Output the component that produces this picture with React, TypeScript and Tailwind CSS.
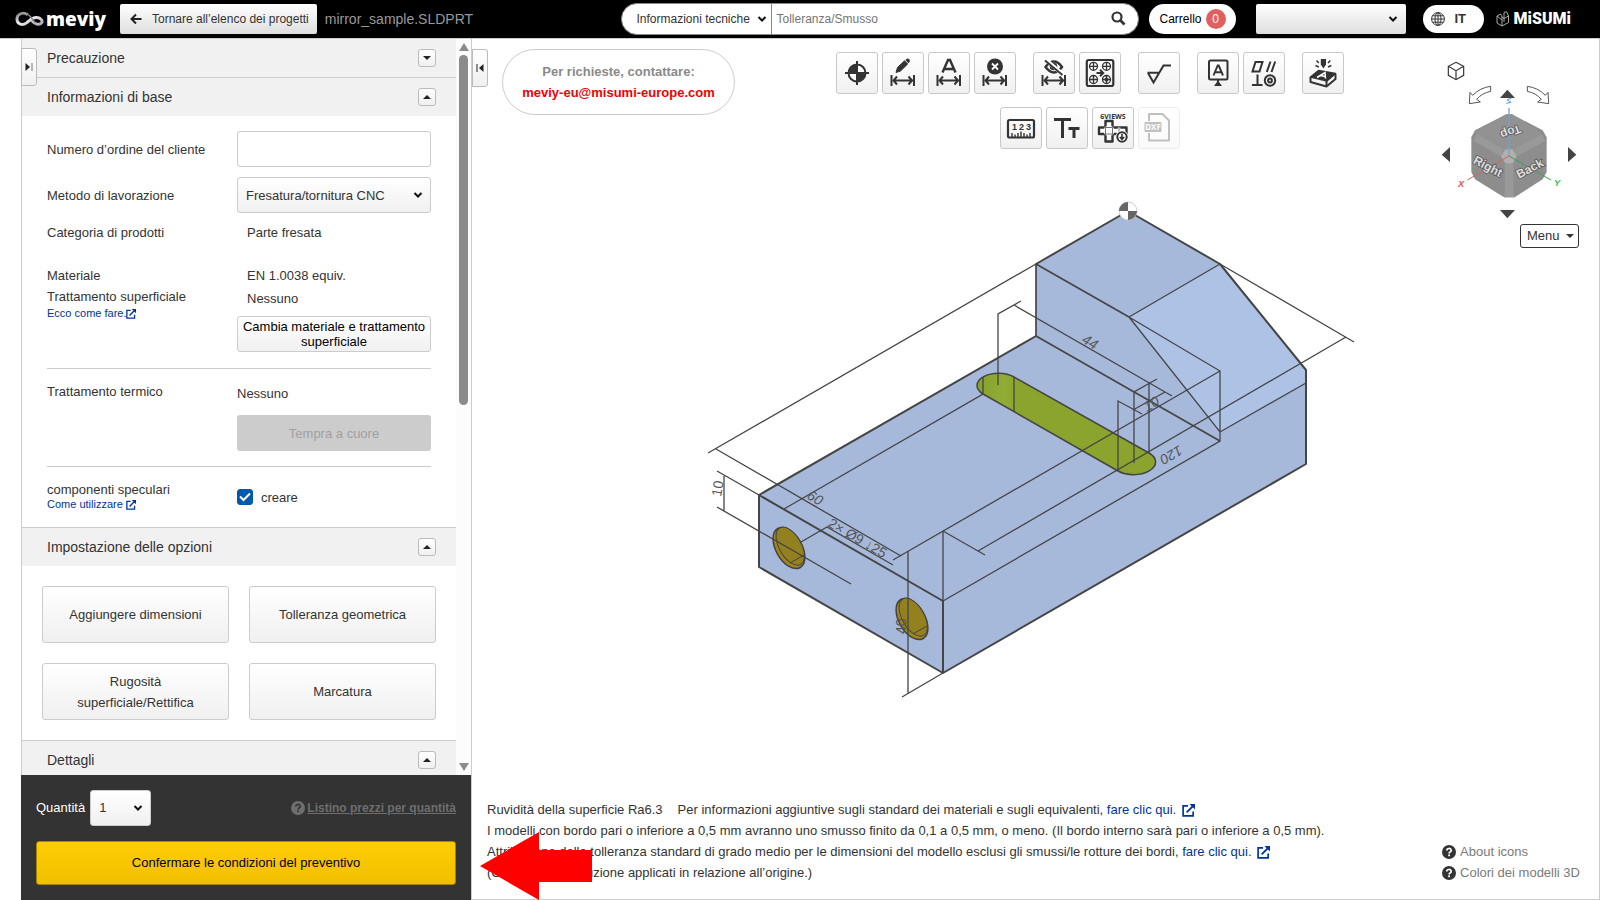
import { useState } from 'react';
import type { ReactNode } from 'react';

type ToolItem = {
  label: string;
  icon: ReactNode;
  disabled?: boolean;
};

const Chevron = () => (
  <svg viewBox="0 0 10 8" className="pointer-events-none absolute right-2 top-1/2 h-2 w-2.5 -translate-y-1/2">
    <path d="M1.5 2 L5 5.5 L8.5 2" fill="none" stroke="#111" strokeWidth="2" />
  </svg>
);

const ExternalIcon = ({ small }: { small?: boolean }) => (
  <svg viewBox="0 0 14 14" className={small ? 'inline size-[10px]' : 'ml-0.5 inline size-[13px]'}>
    <path d="M6.5 2 H1.2 V12.8 H12 V8" fill="none" stroke="#0033a0" strokeWidth="1.8" />
    <path d="M5 9 L11.5 2.5" stroke="#0033a0" strokeWidth="2" />
    <path d="M8 0 H14 V6 Z" fill="#0033a0" />
  </svg>
);

const HelpDot = ({ color, mark }: { color: string; mark: string }) => (
  <svg viewBox="0 0 14 14" className="size-[14px] shrink-0">
    <circle cx="7" cy="7" r="7" fill={color} />
    <path d="M4.8 5.6 C4.8 2.8 9.2 2.8 9.2 5.4 C9.2 6.9 7.1 6.9 7.1 8.5" fill="none" stroke={mark} strokeWidth="1.7" />
    <rect x="6.2" y="9.4" width="1.8" height="1.8" fill={mark} />
  </svg>
);

// horizontal dimension symbol shared by several tool icons
const Span = () => (
  <g fill="none" stroke="#333" strokeWidth="2">
    <path d="M9.5 23 V34 M32 23 V34" />
    <path d="M11 28.5 H31 M15 24.5 L11.5 28.5 L15 32.5 M26.5 24.5 L30 28.5 L26.5 32.5" />
  </g>
);

const bolt = (x: number, y: number) => (
  <g key={`${x}-${y}`} fill="none" stroke="#333" strokeWidth="1.3">
    <circle cx={x} cy={y} r="4" />
    <path d={`M${x - 4} ${y} H${x + 4} M${x} ${y - 4} V${y + 4}`} />
  </g>
);

const topTools: ToolItem[][] = [
  [
    {
      label: 'Origine',
      icon: (
        <>
          <circle cx="21" cy="21" r="8.5" fill="#fff" stroke="#333" strokeWidth="2" />
          <path d="M21 21 V12.5 A8.5 8.5 0 0 0 12.5 21 Z M21 21 V29.5 A8.5 8.5 0 0 0 29.5 21 Z" fill="#333" />
          <path d="M9 21 H33 M21 9 V33" stroke="#333" strokeWidth="2" />
        </>
      ),
    },
    {
      label: 'Modifica dimensione',
      icon: (
        <>
          <path d="M14 20.5 L15.5 15.5 L22.5 8.8 L25.7 12 L18.5 19 Z" fill="#333" stroke="#333" strokeWidth="1" />
          <path d="M23.3 8 L24.5 7 Q26 6 27.3 7.3 Q28.5 8.7 27.5 10 L26.4 11.2 Z" fill="#333" />
          <Span />
        </>
      ),
    },
    {
      label: 'Dimensione automatica',
      icon: (
        <>
          <path d="M14.5 20.5 L20 8 H22 L27.5 20.5 M16.5 17 H25.5" fill="none" stroke="#333" strokeWidth="2.4" />
          <Span />
        </>
      ),
    },
    {
      label: 'Elimina dimensione',
      icon: (
        <>
          <circle cx="21" cy="14.5" r="8" fill="#333" />
          <path d="M18 11.5 L24 17.5 M24 11.5 L18 17.5" stroke="#fff" strokeWidth="1.8" />
          <Span />
        </>
      ),
    },
  ],
  [
    {
      label: 'Nascondi dimensioni',
      icon: (
        <>
          <path d="M12.5 15 Q21 4 29 15 Q21 26 12.5 15 Z" fill="none" stroke="#333" strokeWidth="2.4" />
          <circle cx="20.5" cy="14.5" r="2.8" fill="none" stroke="#333" strokeWidth="2" />
          <path d="M12.5 7.5 L30 22.5" stroke="#fff" strokeWidth="4" />
          <path d="M12 8.5 L29.5 23" stroke="#333" strokeWidth="1.8" />
          <Span />
        </>
      ),
    },
    {
      label: 'Gruppo fori',
      icon: (
        <>
          <rect x="7.8" y="8" width="26.5" height="26" rx="2" fill="none" stroke="#333" strokeWidth="2.2" />
          {[[14.5, 14.3], [27.5, 14.3], [14.5, 27.5], [27.5, 27.5]].map(([x, y]) => bolt(x, y))}
          <circle cx="27.5" cy="27.5" r="2" fill="#333" />
          <path d="M17.5 21 H23.5 M21 17.8 L24.2 21 L21 24.2" fill="none" stroke="#333" strokeWidth="2" />
        </>
      ),
    },
  ],
  [
    {
      label: 'Rugosità',
      icon: <path d="M9.5 20.8 H20.5 M10 21 L15.5 30.5 L25.5 13.5 H33" fill="none" stroke="#333" strokeWidth="2" />,
    },
  ],
  [
    {
      label: 'Riferimento',
      icon: (
        <>
          <rect x="12" y="8.5" width="18.5" height="19" rx="1.5" fill="none" stroke="#333" strokeWidth="2" />
          <path d="M16.5 23.5 L20.7 13.5 H21.7 L26 23.5 M18 20.3 H24.5 M21 27.5 V31" fill="none" stroke="#333" strokeWidth="1.9" />
          <path d="M17 34 L21 28.5 L25 34 Z" fill="#333" />
        </>
      ),
    },
    {
      label: 'Tolleranza geometrica',
      icon: (
        <g fill="none" stroke="#333" strokeWidth="2">
          <path d="M12.5 10 H19.5 L16.5 19.5 H9.5 Z M27.5 9.5 L23.8 20 M32.2 9.5 L28.5 20" />
          <path d="M14.5 22.5 V33 M9 33 H19.5" />
          <circle cx="27" cy="28.5" r="5.2" />
          <circle cx="27" cy="28.5" r="1.9" />
        </g>
      ),
    },
  ],
  [
    {
      label: 'Marcatura',
      icon: (
        <>
          <path d="M18.8 7 H24 V12.5 L21.4 16.5 L18.8 12.5 Z" fill="#333" />
          <path d="M14.5 8.5 L16.8 11 M13.5 13.5 L16.8 15 M28.3 8.5 L26 11 M29.3 13.5 L26 15" stroke="#333" strokeWidth="1.5" />
          <path d="M8.5 25 L16.5 18.5 L33.5 21.5 L25 29 Z" fill="#333" stroke="#333" strokeWidth="1.5" strokeLinejoin="round" />
          <path d="M8.5 25 V30 L24.5 34.5 L33.5 27 V22" fill="none" stroke="#333" strokeWidth="2" strokeLinejoin="round" />
          <path d="M24.5 28.5 V34" stroke="#333" strokeWidth="2" />
          <path d="M15 25.5 L23 20.5 L23.5 26.5 M18.5 23.5 L23 24.5" fill="none" stroke="#fff" strokeWidth="1.5" />
        </>
      ),
    },
  ],
];

const bottomTools: ToolItem[] = [
  {
    label: 'Misura',
    icon: (
      <>
        <rect x="8" y="13" width="26" height="17.5" rx="1.5" fill="none" stroke="#333" strokeWidth="2.2" />
        <g fontSize="9" fontWeight="700" fill="#333" textAnchor="middle">
          <text x="14.5" y="23">1</text>
          <text x="21.5" y="23">2</text>
          <text x="28.5" y="23">3</text>
        </g>
        <path d="M12 30 V26 M15 30 V27.5 M18 30 V26 M21 30 V24.5 M24 30 V26 M27 30 V27.5 M30 30 V26" stroke="#333" strokeWidth="1.4" />
      </>
    ),
  },
  {
    label: 'Dimensione testo',
    icon: (
      <g fill="none" stroke="#333" strokeWidth="3">
        <path d="M8 12.5 H25 M16.5 12.5 V31" />
        <path d="M22.5 21.5 H33.5 M28 21.5 V31" />
      </g>
    ),
  },
  {
    label: 'Sei viste',
    icon: (
      <>
        <text x="21" y="11.5" fontSize="7" fontFamily="Open Sans" fontWeight="700" fill="#333" textAnchor="middle">6VIEWS</text>
        <path d="M13.5 14 H20.5 V20.5 H34.5 V27 H20.5 V34.5 H13.5 V27 H7 V20.5 H13.5 Z" fill="#fff" stroke="#333" strokeWidth="2.4" strokeLinejoin="round" />
        <path d="M13.5 20.5 H20.5 M13.5 27 H20.5 M13.5 20.5 V27 M20.5 20.5 V27 M27 20.5 V27" stroke="#fff" strokeWidth="2.6" />
        <path d="M13.5 20.5 H20.5 M13.5 27 H20.5 M13.5 20.5 V27 M20.5 20.5 V27 M27 20.5 V27" stroke="#333" strokeWidth="0.7" />
        <circle cx="30" cy="30" r="6.5" fill="#fff" />
        <circle cx="30" cy="30" r="4.7" fill="#fff" stroke="#333" strokeWidth="2" />
        <path d="M30 27 V32 M27.8 30 L30 32.4 L32.2 30" fill="none" stroke="#333" strokeWidth="1.6" />
      </>
    ),
  },
  {
    label: 'Esporta DXF',
    disabled: true,
    icon: (
      <>
        <path d="M11 14 V7 H24.5 L31 13.5 V33.5 H11 V26" fill="none" stroke="#333" strokeWidth="2" strokeLinejoin="round" />
        <rect x="6.5" y="15" width="17" height="10" rx="1" fill="#333" />
        <text x="15" y="23" fontSize="8" fontFamily="Open Sans" fontWeight="700" fill="#fff" textAnchor="middle">DXF</text>
      </>
    ),
  },
];

const ToolButton = ({ tool }: { tool: ToolItem }) => (
  <button
    aria-label={tool.label}
    disabled={tool.disabled}
    className="flex size-[42px] items-center justify-center rounded-[3px] border border-[#c8c8c8] bg-linear-to-b from-white to-[#f0f0f0] disabled:opacity-30"
  >
    <svg viewBox="0 0 42 42" className="size-[42px] shrink-0">{tool.icon}</svg>
  </button>
);

const SectionHeader = ({ title, open, onToggle }: { title: string; open: boolean; onToggle: () => void }) => (
  <div className="flex h-[39px] shrink-0 items-center justify-between border-t border-[#ccc] bg-[#f1f1f1] pl-[25px] pr-5">
    <h2 className="text-sm">{title}</h2>
    <button
      onClick={onToggle}
      aria-label={title}
      className="flex size-[18px] items-center justify-center rounded-[3px] border border-[#bbb] bg-linear-to-b from-white to-[#f0f0f0]"
    >
      <svg viewBox="0 0 8 4" className="h-1 w-2">
        <path d={open ? 'M0 4 L4 0 L8 4 Z' : 'M0 0 L4 4 L8 0 Z'} fill="#222" />
      </svg>
    </button>
  </div>
);

const TopBar = () => (
  <header className="flex h-[39px] shrink-0 items-center border-b border-[#ccc] bg-black pb-px pl-[15px] pr-[29px]">
    <div className="flex w-[105px] shrink-0 items-center gap-0.5">
      <svg viewBox="0 0 30 16" className="h-4 w-[29px]">
        <defs>
          <linearGradient id="loop" x1="0" y1="0" x2="1" y2="1">
            <stop offset="0" stopColor="#77757a" />
            <stop offset="0.45" stopColor="#f2f0f4" />
            <stop offset="1" stopColor="#a9a7ac" />
          </linearGradient>
        </defs>
        <path
          d="M13 3.5 C8 0 2 3 2 8 C2 13 7 15.5 12 12 C16 9 18 6 22.5 6.5 C27 7 29 10 27.5 12 C25.5 15 20 13 17.5 10"
          fill="none"
          stroke="url(#loop)"
          strokeWidth="3"
        />
        <path d="M11 2.5 C16 3 17 8 21 12" fill="none" stroke="#88868b" strokeWidth="1.5" />
      </svg>
      <span className="font-['Open_Sans'] text-[19px] font-extrabold leading-6 text-white">meviy</span>
    </div>
    <button className="flex h-[30px] shrink-0 items-center gap-2.5 rounded-[2px] bg-linear-to-b from-white to-[#dedede] pl-2.5 pr-2 text-xs">
      <svg viewBox="0 0 12 12" className="size-3">
        <path d="M11.5 6 H2 M6 1.5 L1.5 6 L6 10.5" fill="none" stroke="#222" strokeWidth="2" />
      </svg>
      Tornare all’elenco dei progetti
    </button>
    <span className="ml-2 text-sm text-[#999]">mirror_sample.SLDPRT</span>

    <div className="ml-auto flex items-center">
      <form className="flex h-8 w-[518px] items-center overflow-hidden rounded-full border border-[#888] bg-white">
        <div className="relative h-full w-[150px] shrink-0 border-r border-[#888]">
          <select aria-label="Ambito" className="h-full w-full appearance-none bg-transparent pl-3.5 text-xs outline-none">
            <option>Informazioni tecniche</option>
          </select>
          <div className="absolute inset-y-0 -right-1 w-5">
            <Chevron />
          </div>
        </div>
        <input aria-label="Cerca" placeholder="Tolleranza/Smusso" className="h-full min-w-0 flex-1 px-1 text-xs outline-none placeholder:text-[#757575]" />
        <button aria-label="Avvia ricerca" className="mr-3">
          <svg viewBox="0 0 15 15" className="size-[15px]">
            <circle cx="6" cy="6" r="4.5" fill="none" stroke="#333" strokeWidth="2.2" />
            <path d="M9.3 9.3 L13.5 13.5" stroke="#333" strokeWidth="2.8" />
          </svg>
        </button>
      </form>
      <button className="ml-2.5 flex h-[30px] items-center gap-1 rounded-full bg-white px-2.5 text-xs text-black">
        Carrello
        <span className="flex size-5 items-center justify-center rounded-full bg-[#e05f5f] text-white">0</span>
      </button>
      <div className="relative ml-5 h-[30px] w-[150px]">
        <select aria-label="Account" className="h-full w-full appearance-none rounded-[2px] bg-linear-to-b from-white to-[#dedede]">
          <option></option>
        </select>
        <Chevron />
      </div>
      <button className="ml-[17px] flex h-7 w-[61px] items-center gap-2.5 rounded-full bg-white px-2 text-[13px] font-bold">
        <svg viewBox="0 0 14 14" className="size-3.5" fill="none" stroke="#333" strokeWidth="1">
          <circle cx="7" cy="7" r="6.4" />
          <ellipse cx="7" cy="7" rx="3" ry="6.4" />
          <path d="M7 0.6 V13.4 M0.6 7 H13.4 M1.5 3.8 H12.5 M1.5 10.2 H12.5" />
        </svg>
        IT
      </button>
      <div className="ml-3 flex items-center gap-1 text-white">
        <svg viewBox="0 0 14 16" className="h-4 w-3.5" fill="none" stroke="#bbb" strokeWidth="0.9">
          <path d="M1 5 L4.5 3 L6 6 V15 L1 12 Z M6 6 L8 7.5 M6 15 L12.5 11.5 V5 L8 7.5 V11 M8 7.5 V1.5 L10.5 0.7 L12.5 5 M1 5 L6 9" />
        </svg>
        <span className="font-[Roboto] text-base font-black leading-5">MiSUMi</span>
      </div>
    </div>
  </header>
);

const fieldButton =
  'rounded-[3px] border border-[#ccc] bg-linear-to-b from-white to-[#f0f0f0]';

const options = ['Aggiungere dimensioni', 'Tolleranza geometrica', 'Rugosità superficiale/Rettifica', 'Marcatura'];

const Sidebar = () => {
  const [open, setOpen] = useState({ warning: false, base: true, options: true, details: true });
  const [mirror, setMirror] = useState<boolean>(true);

  const toggle = (key: keyof typeof open) => setOpen({ ...open, [key]: !open[key] });

  return (
    <aside className="relative flex w-[450px] shrink-0 flex-col">
      <div className="flex min-h-0 flex-1 border-l border-[#ccc]">
        <div className="-mt-px min-w-0 flex-1 overflow-hidden">
          <SectionHeader title="Precauzione" open={open.warning} onToggle={() => toggle('warning')} />
          <SectionHeader title="Informazioni di base" open={open.base} onToggle={() => toggle('base')} />
          {open.base && (
            <div className="flex flex-col px-[25px] pb-[15px] pt-[15px] text-[13px] leading-[21px]">
              <div className="flex h-9 items-center">
                <label htmlFor="order" className="flex-1">Numero d’ordine del cliente</label>
                <input id="order" className="h-9 w-[194px] rounded-[3px] border border-[#ccc] px-2" />
              </div>
              <div className="mt-2.5 flex h-9 items-center">
                <label htmlFor="method" className="flex-1">Metodo di lavorazione</label>
                <div className="relative w-[194px]">
                  <select id="method" className={`h-9 w-full appearance-none pl-2 ${fieldButton}`}>
                    <option>Fresatura/tornitura CNC</option>
                  </select>
                  <Chevron />
                </div>
              </div>
              <div className="mt-[9px] flex">
                <span className="flex-1">Categoria di prodotti</span>
                <span className="w-[194px] pl-2.5">Parte fresata</span>
              </div>
              <div className="mt-[22px] flex">
                <div className="flex flex-1 flex-col items-start">
                  <span>Materiale</span>
                  <span>Trattamento superficiale</span>
                  <a href="#" className="text-[11px] leading-3 text-[#0033a0]">
                    Ecco come fare.<ExternalIcon small />
                  </a>
                </div>
                <div className="flex w-[194px] flex-col">
                  <span className="pl-2.5">EN 1.0038 equiv.</span>
                  <span className="mt-0.5 pl-2.5">Nessuno</span>
                  <button className={`mt-[7px] h-9 leading-[15px] text-black ${fieldButton}`}>
                    Cambia materiale e trattamento superficiale
                  </button>
                </div>
              </div>
              <hr className="mt-4 border-[#ccc]" />
              <div className="mt-3 flex">
                <span className="flex-1">Trattamento termico</span>
                <div className="flex w-[194px] flex-col pt-0.5">
                  <span>Nessuno</span>
                  <button disabled className="mt-[11px] h-9 rounded-[3px] bg-[#ccc] text-[#a0a0a0]">
                    Tempra a cuore
                  </button>
                </div>
              </div>
              <hr className="mt-[15px] border-[#ccc]" />
              <div className="mt-[15px] flex">
                <div className="flex flex-1 flex-col items-start leading-[15px]">
                  <span>componenti speculari</span>
                  <a href="#" className="text-[11px] text-[#0033a0]">
                    Come utilizzare <ExternalIcon small />
                  </a>
                </div>
                <label className="flex w-[194px] items-center gap-2">
                  <input
                    type="checkbox"
                    checked={mirror}
                    onChange={(e) => setMirror(e.target.checked)}
                    className="peer sr-only"
                  />
                  <span className="flex size-4 items-center justify-center rounded-[3px] border border-[#0059ab] bg-white peer-checked:bg-[#0059ab]">
                    <svg viewBox="0 0 12 10" className="h-2.5 w-3 shrink-0">
                      <path d="M1 4.5 L4.5 8 L11 1.5" fill="none" stroke="#fff" strokeWidth="2" />
                    </svg>
                  </span>
                  creare
                </label>
              </div>
            </div>
          )}
          <SectionHeader title="Impostazione delle opzioni" open={open.options} onToggle={() => toggle('options')} />
          {open.options && (
            <div className="grid grid-cols-2 gap-5 p-5">
              {options.map((name) => (
                <button key={name} className={`h-[57px] px-5 text-[13px] leading-[21px] ${fieldButton}`}>
                  {name}
                </button>
              ))}
            </div>
          )}
          <SectionHeader title="Dettagli" open={open.details} onToggle={() => toggle('details')} />
        </div>
        <div className="flex w-[15px] shrink-0 flex-col items-center bg-[#fcfcfc] py-1">
          <svg viewBox="0 0 10 8" className="h-2 w-2.5"><path d="M5 0 L10 8 H0 Z" fill="#8b8b8b" /></svg>
          <div className="mt-1 h-[350px] w-[9px] rounded-full bg-[#8b8b8b]" />
          <svg viewBox="0 0 10 8" className="mt-auto h-2 w-2.5"><path d="M5 8 L10 0 H0 Z" fill="#8b8b8b" /></svg>
        </div>
      </div>

      <div className="flex h-[125px] shrink-0 flex-col bg-[#333] px-[15px] pt-[15px] text-[13px]">
        <div className="flex items-center">
          <label htmlFor="qty" className="text-white">Quantità</label>
          <div className="relative ml-[5px] h-9 w-[61px]">
            <select id="qty" className={`h-full w-full appearance-none pl-2 ${fieldButton}`}>
              <option>1</option>
            </select>
            <Chevron />
          </div>
          <a href="#" className="ml-auto flex items-center gap-0.5 text-xs font-bold text-[#6e6e6e] underline">
            <HelpDot color="#6e6e6e" mark="#333" />
            Listino prezzi per quantità
          </a>
        </div>
        <button className="mt-[15px] h-11 rounded-[3px] border border-[#a58500] bg-linear-to-b from-[#ffcd05] to-[#f0c000] text-black">
          Confermare le condizioni del preventivo
        </button>
      </div>

      <button aria-label="Riduci pannello" className="absolute left-0 top-[9px] flex h-[38px] w-4 items-center justify-center rounded-r-[3px] border border-[#bbb] bg-linear-to-b from-white to-[#f0f0f0]">
        <svg viewBox="0 0 8 8" className="size-2">
          <path d="M0.5 0 L5 4 L0.5 8 Z" fill="#222" />
          <path d="M7 0 V8" stroke="#777" />
        </svg>
      </button>
    </aside>
  );
};

const ViewCube = () => (
  <svg viewBox="114 36 483 510" className="h-[170px] w-[161px]">
    <g fill="none" stroke="#333" strokeWidth="3.5">
      <path d="M168 67 L191 79 V106 L168 119 L145 106 V79 Z M145 79 L168 92 L191 79 M168 92 V119" />
    </g>
    <g fill="#fff" stroke="#555" strokeWidth="3">
      <path d="M272 139 V154 Q246 159 230 178 L241 186 L208 191 L210 157 L218 166 Q240 143 272 139 Z" />
      <path d="M382 139 V154 Q408 159 424 178 L413 186 L446 191 L444 157 L436 166 Q414 143 382 139 Z" />
    </g>
    <g fill="#444">
      <path d="M322 149 L345 174 H300 Z M322 535 L345 510 H300 Z M125 344 L150 321 V366 Z M529 344 L504 321 V366 Z" />
    </g>
    <path d="M319 223 H336 L428 271 L440 292 V396 L428 418 L344 472 H312 L225 418 L214 396 V292 L225 271 Z" fill="#8d8d8d" />
    <path d="M319 223 H336 L424 278 L412 300 L344 333 L327 325 L307 333 L240 303 L227 276 Z" fill="#929292" />
    <path d="M230 282 L310 328 L303 349 L220 303 Z M426 282 L342 328 L350 349 L436 303 Z M314 366 H340 V460 L344 472 H312 L314 460 Z" fill="#999" />
    <path d="M316 328 H338 L350 349 L338 370 H316 L303 349 Z" fill="#b0b0b0" />
    <path d="M327 204 V348" stroke="#7a9fd0" strokeWidth="4" />
    <path d="M327 348 L202 420" stroke="#d96060" strokeWidth="3" />
    <path d="M327 348 L453 420" stroke="#3f9e5b" strokeWidth="3" />
    <g
      fontFamily="Liberation Sans"
      fontSize="36"
      fontWeight="700"
      fill="#dedede"
      stroke="#5c5c5c"
      strokeWidth="5"
      paintOrder="stroke"
      textAnchor="middle"
    >
      <text transform="translate(258 390) rotate(28)">Right</text>
      <text transform="translate(395 396) rotate(-28)">Back</text>
      <text transform="translate(328 264) rotate(160)">Top</text>
    </g>
    <g fontFamily="Liberation Sans" fontSize="28" fontWeight="700" fontStyle="italic" textAnchor="middle">
      <text x="183" y="441" fill="#f05050">X</text>
      <text x="471" y="439" fill="#2fc85a">Y</text>
    </g>
    <path d="M319 190 L333 187 L321 179 L334 175" fill="none" stroke="#4f9be8" strokeWidth="3" />
  </svg>
);

const PartModel = () => (
  <svg viewBox="472 39 1127 860" className="absolute inset-0 h-full w-full" fontFamily="Liberation Sans">
    <defs>
      <linearGradient id="slot" x1="976" y1="0" x2="1016" y2="0" gradientUnits="userSpaceOnUse">
        <stop offset="0" stopColor="#84a02b" />
        <stop offset="0.7" stopColor="#92ad36" />
        <stop offset="1" stopColor="#8aa42d" />
      </linearGradient>
    </defs>
    <path d="M759 495 L1036 336 V264 L1128 211 L1220 264 L1306 370 V464 L943 673 L759 567 Z" fill="#a7b9da" />
    <path d="M1129 317 L1220 264 L1306 370 V383 L1220 432 Z" fill="#aec2e5" />
    <path d="M1014 377 L1149 453 A21 12 0 0 1 1118 471 L983 394 A21 12 0 0 1 1014 377 Z" fill="url(#slot)" stroke="#444" strokeWidth="1.5" />

    {/* threaded holes on the front face */}
    {[[789, 548], [912, 619]].map(([x, y]) => (
      <g key={x} transform={`translate(${x} ${y})`} stroke="#444">
        <ellipse rx="22.5" ry="13" transform="rotate(60)" fill="#a3861b" strokeWidth="1.5" />
        <ellipse cx="-1" cy="-2" rx="21" ry="11" transform="rotate(60)" fill="#93801f" strokeWidth="1" />
        <path d="M1 15 L15 7" fill="none" />
      </g>
    ))}

    <g fill="none" stroke="#454545" strokeWidth="2" strokeLinejoin="round">
      <path d="M759 495 L1036 336 M1036 264 L1128 211 L1220 264 L1306 370 V464 L943 673 L759 567 V495 L943 601 V673" />
      <path d="M1036 336 V264 L1129 317 M1036 336 L1220 441" strokeWidth="1.7" />
    </g>
    <g fill="none" stroke="#454545" strokeWidth="1.3">
      <path d="M1129 317 L1220 264 M1129 317 L1220 432 L1306 383 M943 601 L1220 441 V371 L1129 317" />
      <path d="M1220 371 L893 560 M943 531 V601 M943 531 L985 555" />
      <path d="M1220 264 L1354 342 M1346 337 L978 551" />
      <path d="M1036 264 L708 453 M716 449 L901 556" />
      <path d="M717 471 L759 495 M717 507 L851 584 M724 476 V511" />
      <path d="M784 509 L983 394 V377 M1014 377 V411" />
      <path d="M801 542 L827 527 L893 565" />
      <path d="M908 551 V693 M902 697 L943 673" />
      <path d="M998 385 V314 L1021 301 M1014 305 L1172 396" />
      <path d="M1134 463 V392 L1157 379 M1149 453 V383 M1118 471 V401 L1142 414 M1133 410 L1165 392" />
    </g>
    <g fontSize="14" fill="#555">
      <text transform="translate(721 497) rotate(-80)">10</text>
      <text transform="translate(806 498) rotate(30)" fontStyle="italic">60</text>
      <text transform="translate(827 526) rotate(30)">2× Ø9 ↓25</text>
      <text transform="translate(906 634) rotate(-90)">40</text>
      <text transform="translate(1081 342) rotate(30)" fontStyle="italic">44</text>
      <text transform="translate(1147 412) rotate(-30)" fontStyle="italic">10</text>
      <text transform="translate(1179 445) rotate(150)" fontStyle="italic">120</text>
    </g>

    <circle cx="1128" cy="211" r="9" fill="#fff" stroke="#ccc" />
    <path d="M1128 211 V202 A9 9 0 0 0 1119 211 Z M1128 211 V220 A9 9 0 0 0 1137 211 Z" fill="#666" />
  </svg>
);

const Viewer = () => (
  <main className="relative flex min-w-0 flex-1 flex-col justify-between border-x border-b border-[#ccc] bg-white">
    <PartModel />

    <div className="relative flex items-start">
      <div className="ml-[30px] mr-1.5 mt-2.5 flex h-[66px] w-[233px] shrink-0 flex-col items-center justify-center rounded-full border border-[#ccc] bg-white text-[13px] font-bold leading-[21px]">
        <span className="text-[#8a8a8a]">Per richieste, contattare:</span>
        <a href="mailto:meviy-eu@misumi-europe.com" className="text-[#f00000]">meviy-eu@misumi-europe.com</a>
      </div>
      <div className="flex flex-1 flex-col items-center gap-[13px] pt-[13px]">
        <div className="flex gap-[17px]">
          {topTools.map((group, index) => (
            <div key={index} className="flex gap-1">
              {group.map((tool) => <ToolButton key={tool.label} tool={tool} />)}
            </div>
          ))}
        </div>
        <div className="flex gap-1">
          {bottomTools.map((tool) => <ToolButton key={tool.label} tool={tool} />)}
        </div>
      </div>
      <div className="flex shrink-0 flex-col items-end pt-[13px]">
        <ViewCube />
        <button className="mr-5 mt-0.5 flex h-6 w-[59px] items-center justify-between rounded-[3px] border border-[#333] bg-white pl-1.5 pr-1 text-[13px]">
          Menu
          <svg viewBox="0 0 8 4" className="h-1 w-2"><path d="M0 0 L4 4 L8 0 Z" fill="#333" /></svg>
        </button>
      </div>
    </div>

    <div className="relative flex items-end justify-between pb-4 pl-[15px] pr-[19px] text-[13px] leading-[21px]">
      <div>
        <p>
          <span className="mr-[15px]">Ruvidità della superficie Ra6.3</span>
          Per informazioni aggiuntive sugli standard dei materiali e sugli equivalenti,{' '}
          <a href="#" className="text-[#0033a0]">fare clic qui. <ExternalIcon /></a>
        </p>
        <p>I modelli con bordo pari o inferiore a 0,5 mm avranno uno smusso finito da 0,1 a 0,5 mm, o meno. (Il bordo interno sarà pari o inferiore a 0,5 mm).</p>
        <p>
          Attribuzione della tolleranza standard di grado medio per le dimensioni del modello esclusi gli smussi/le rotture dei bordi,{' '}
          <a href="#" className="text-[#0033a0]">fare clic qui. <ExternalIcon /></a>
        </p>
        <p>(Gli assi di distribuzione applicati in relazione all’origine.)</p>
      </div>
      <div className="flex flex-col text-[#7a7a7a]">
        <a href="#" className="flex items-center gap-1"><HelpDot color="#333" mark="#fff" />About icons</a>
        <a href="#" className="flex items-center gap-1"><HelpDot color="#333" mark="#fff" />Colori dei modelli 3D</a>
      </div>
    </div>

    <svg viewBox="0 0 112 68" className="absolute -bottom-px left-2 h-[68px] w-28">
      <path d="M0 34 L59 0 V18 H112 V50 H59 V68 Z" fill="#f00" />
    </svg>

    <button aria-label="Espandi pannello" className="absolute left-0 top-2.5 flex h-[38px] w-4 items-center justify-center rounded-r-[3px] border border-[#bbb] bg-linear-to-b from-white to-[#f0f0f0]">
      <svg viewBox="0 0 8 8" className="size-2">
        <path d="M7.5 0 L3 4 L7.5 8 Z" fill="#222" />
        <path d="M1 0 V8" stroke="#222" />
      </svg>
    </button>
  </main>
);

const App = () => (
  <div className="flex h-screen flex-col bg-white font-['Liberation_Sans',Arial,sans-serif] text-[#333]">
    <TopBar />
    <div className="flex min-h-0 flex-1 pl-[21px]">
      <Sidebar />
      <Viewer />
    </div>
  </div>
);

export default App;
